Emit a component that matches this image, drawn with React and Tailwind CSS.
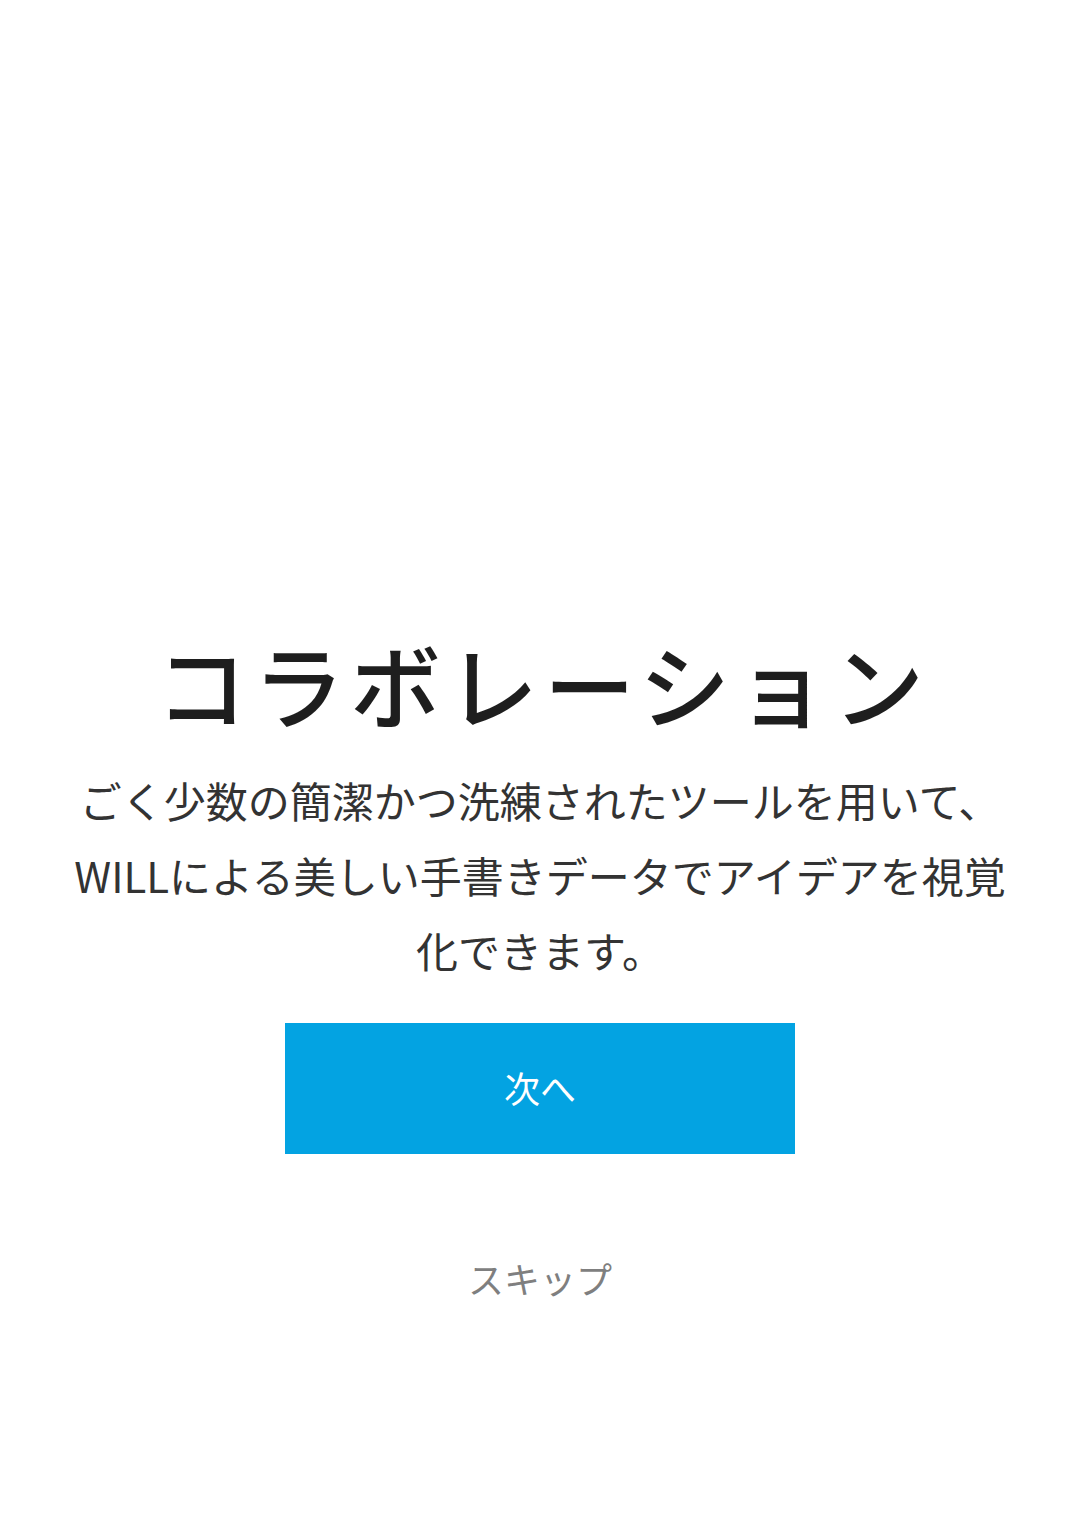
export default function App() {
  const jp = { fontFamily: '"Noto Sans CJK JP", "Noto Sans", sans-serif' };
  return (
    <div className="w-[1080px] h-[1533px] bg-white flex flex-col items-center" style={jp}>
      <h1 className="mt-[637px] text-[91px] leading-[90px] tracking-[6px] pl-[6px] text-[#1e1e1e] font-medium whitespace-nowrap">
        コラボレーション
      </h1>
      <div className="mt-[35px] text-[42px] leading-[75px] text-[#333333] text-center whitespace-nowrap">
        <p>ごく少数の簡潔かつ洗練されたツールを用いて、</p>
        <p>WILLによる美しい手書きデータでアイデアを視覚</p>
        <p>化できます。</p>
      </div>
      <button className="mt-[36px] w-[510px] h-[131px] bg-[#03a3e2] text-white text-[36px] pb-[4px] flex items-center justify-center">
        次へ
      </button>
      <button className="mt-[100px] text-[36px] leading-[48px] text-[#7f7f7f]">
        スキップ
      </button>
    </div>
  );
}
